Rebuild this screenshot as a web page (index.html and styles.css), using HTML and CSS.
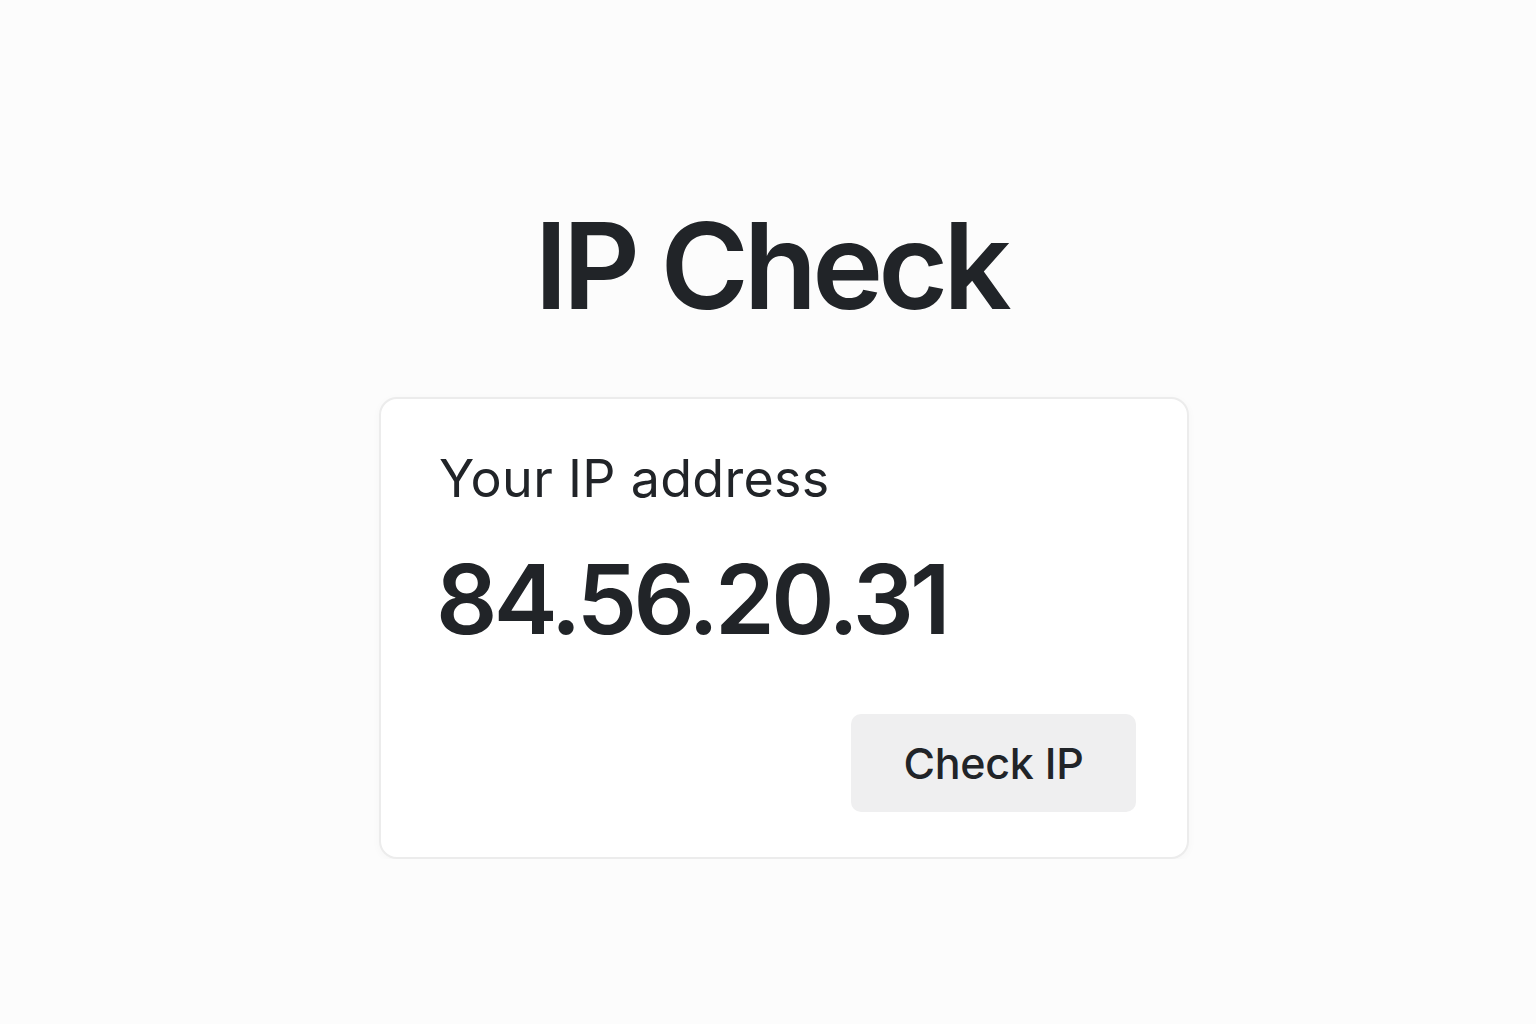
FILE: index.html
```html
<!DOCTYPE html>
<html lang="en">
<head>
    <meta charset="UTF-8">
    <meta name="viewport" content="width=device-width, initial-scale=1.0">
    <title>IP Check</title>
    <link rel="stylesheet" href="styles.css">
</head>
<body>
    <div id="ip-check">
        <h1>IP Check</h1>
        <div class="ip-card">
            <div class="ip-label">Your IP address</div>
            <div class="ip-value" id="ip-value">84.56.20.31</div>
            <div class="ip-actions">
                <button class="check-button">Check IP</button>
            </div>
        </div>
    </div>
</body>
</html>
```

FILE: styles.css
```css
body {
    font-family: 'Inter', 'Liberation Sans', sans-serif;
    margin: 0;
    padding: 0;
    background-color: #fcfcfc;
    color: #212428;
}

#ip-check {
    display: flex;
    flex-direction: column;
    align-items: center;
    padding-top: 200px;
    padding-left: 32px;
}

h1 {
    font-size: 120px;
    font-weight: 600;
    line-height: 1.1;
    margin: 0 27px 65px 0;
    letter-spacing: -5px;
}

.ip-card {
    width: 810px;
    box-sizing: border-box;
    background-color: #fff;
    border: 2px solid #ececec;
    border-radius: 18px;
    box-shadow: 0 2px 8px rgba(0, 0, 0, 0.03);
    padding: 49px 51px 45px 58px;
}

.ip-label {
    font-size: 52px;
    font-weight: 400;
    line-height: 1.2;
    letter-spacing: 0.3px;
}

.ip-value {
    font-size: 96px;
    font-weight: 600;
    line-height: 1.2;
    letter-spacing: -3.7px;
    margin-top: 32px;
    margin-left: -3px;
}

.ip-actions {
    display: flex;
    justify-content: flex-end;
    margin-top: 56px;
}

.check-button {
    font-family: inherit;
    font-size: 43px;
    font-weight: 500;
    letter-spacing: -0.3px;
    color: #212428;
    background-color: #efeff0;
    border: none;
    border-radius: 10px;
    width: 285px;
    height: 98px;
    cursor: pointer;
}
```
